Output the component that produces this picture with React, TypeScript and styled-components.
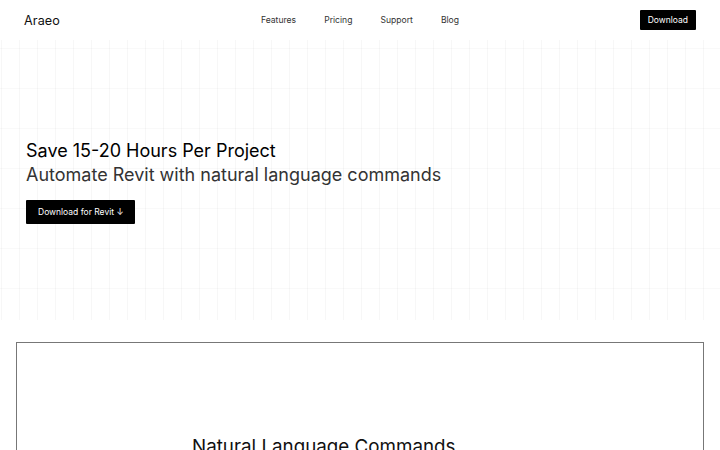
import React from 'react';
import styled, { createGlobalStyle } from 'styled-components';

const GlobalStyle = createGlobalStyle`
  * { box-sizing: border-box; }
  body {
    margin: 0;
    background: #ffffff;
    font-family: Inter, "Noto Sans", sans-serif;
    color: #000;
    -webkit-font-smoothing: antialiased;
  }
`;

const Page = styled.div`
  width: 100%;
  min-height: 100vh;
  display: flex;
  flex-direction: column;
`;

const NavBar = styled.header`
  height: 40px;
  display: grid;
  grid-template-columns: 1fr auto 1fr;
  align-items: center;
  padding: 0 24px;
`;

const Logo = styled.div`
  font-size: 12.6px;
  font-weight: 400;
  letter-spacing: 0.1px;
  color: #111;
`;

const NavLinks = styled.nav`
  display: flex;
  gap: 28px;
`;

const NavLink = styled.a`
  font-size: 8.6px;
  color: #333;
  text-decoration: none;
  cursor: pointer;
`;

const NavActions = styled.div`
  display: flex;
  justify-content: flex-end;
`;

const DarkButton = styled.button<{ $small?: boolean }>`
  background: #000;
  color: #fff;
  border: none;
  border-radius: 1px;
  font-family: inherit;
  cursor: pointer;
  height: ${(p) => (p.$small ? '20px' : '24px')};
  padding: ${(p) => (p.$small ? '0 8px' : '0 12px')};
  font-size: 8.5px;
  display: inline-flex;
  align-items: center;
  gap: 3px;
`;

const Hero = styled.section`
  height: 280px;
  display: flex;
  flex-direction: column;
  justify-content: center;
  align-items: flex-start;
  padding: 3px 26px 0;
  background-color: #fff;
  background-image:
    linear-gradient(to right, rgba(0, 0, 0, 0.03) 1px, transparent 1px),
    linear-gradient(to bottom, rgba(0, 0, 0, 0.025) 1px, transparent 1px);
  background-size: 18px 40px;
  background-position: 1px 8px;
`;

const Title = styled.h1`
  margin: 0;
  font-size: 18px;
  font-weight: 400;
  line-height: 24px;
  color: #000;
`;

const Subtitle = styled.p`
  margin: 0 0 13px;
  font-size: 18px;
  font-weight: 400;
  line-height: 24px;
  color: #333;
`;

const Card = styled.section`
  margin: 22px 16px 0;
  border: 1px solid #777;
  border-bottom: none;
  padding: 92px 0 0 175px;
  flex: 1;
`;

const CardTitle = styled.h2`
  margin: 0;
  font-size: 18.8px;
  font-weight: 400;
  color: #111;
`;

export default function App() {
  return (
    <Page>
      <GlobalStyle />
      <NavBar>
        <Logo>Araeo</Logo>
        <NavLinks>
          <NavLink>Features</NavLink>
          <NavLink>Pricing</NavLink>
          <NavLink>Support</NavLink>
          <NavLink>Blog</NavLink>
        </NavLinks>
        <NavActions>
          <DarkButton $small>Download</DarkButton>
        </NavActions>
      </NavBar>
      <Hero>
        <Title>Save 15-20 Hours Per Project</Title>
        <Subtitle>Automate Revit with natural language commands</Subtitle>
        <DarkButton>Download for Revit ↓</DarkButton>
      </Hero>
      <Card>
        <CardTitle>Natural Language Commands</CardTitle>
      </Card>
    </Page>
  );
}
